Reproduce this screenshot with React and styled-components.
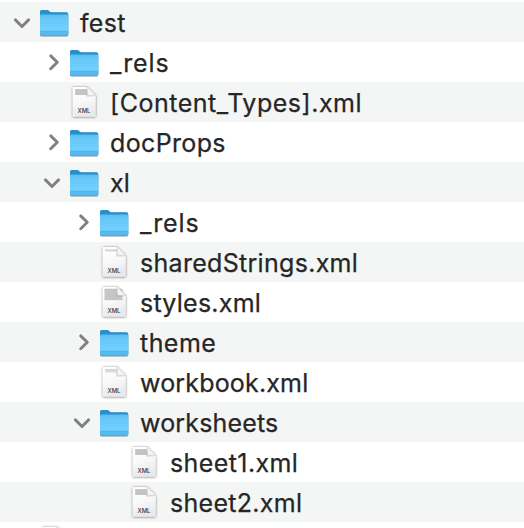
import React from 'react';
import styled, { createGlobalStyle } from 'styled-components';

const GlobalStyle = createGlobalStyle`
  html, body { margin: 0; background: #fff; overflow: hidden; }
`;

const Tree = styled.div`
  display: flex;
  flex-direction: column;
  width: 524px;
  height: 528px;
  padding-top: 2px;
  box-sizing: border-box;
  overflow: hidden;
  background: #fff;
  font-family: Inter, "Liberation Sans", sans-serif;
`;

const Row = styled.div`
  display: flex;
  flex: none;
  align-items: center;
  height: 40px;
  padding-left: ${(p) => 10 + p.$level * 30}px;
  background: ${(p) => (p.$striped ? '#f4f5f5' : '#fff')};
`;

const Disclosure = styled.div`
  width: 24px;
  height: 24px;
  flex: none;
  svg { display: block; }
`;

const IconSlot = styled.div`
  width: 40px;
  height: 40px;
  padding-left: 4px;
  box-sizing: border-box;
  flex: none;
  margin-right: 6px;
  svg { display: block; }
`;

const Label = styled.span`
  font-size: 25px;
  font-weight: 400;
  line-height: 40px;
  padding-top: 1.6px;
  color: #262626;
  -webkit-text-stroke: 0.25px #262626;
  white-space: pre;
  letter-spacing: ${(p) => p.$tracking}px;
`;

function Chevron({ open }) {
  return (
    <svg width="24" height="24" viewBox="0 0 24 24" fill="none" stroke="#808080" strokeWidth="2.9" strokeLinecap="round" strokeLinejoin="round">
      <path d={open ? 'M5.4 9.9L12 16.5L18.6 9.9' : 'M10.7 5.9L17.3 12.3L10.7 18.7'} />
    </svg>
  );
}

function FolderIcon() {
  return (
    <svg width="34" height="40" viewBox="0 0 34 40">
      <defs>
        <linearGradient id="folderFront" x1="0" y1="0" x2="0" y2="1">
          <stop offset="0" stopColor="#5dbcee" />
          <stop offset="0.2" stopColor="#67c8f9" />
          <stop offset="0.7" stopColor="#70cffd" />
          <stop offset="1" stopColor="#63c4f6" />
        </linearGradient>
        <filter id="folderShadow" x="-15%" y="-15%" width="130%" height="130%">
          <feDropShadow dx="0" dy="0.5" stdDeviation="0.6" floodColor="#000" floodOpacity="0.4" />
        </filter>
      </defs>
      <g filter="url(#folderShadow)">
        <path d="M2 13V9.6Q2 8 3.6 8H9.2C10.8 8 11.4 10.2 13 10.2H28.4Q30.2 10.2 30.2 12V32Q30.2 33.8 28.4 33.8H3.8Q2 33.8 2 32Z" fill="#2590cd" />
        <path d="M2 13.4Q2 12.6 3 12.6H29.2Q30.2 12.6 30.2 13.4V32Q30.2 33.8 28.4 33.8H3.8Q2 33.8 2 32Z" fill="url(#folderFront)" />
      </g>
      <path d="M2 29.6H30.2V32Q30.2 33.8 28.4 33.8H3.8Q2 33.8 2 32Z" fill="#58b9ee" />
      <path d="M2.2 29.3H30" stroke="#48abe2" strokeWidth="0.7" />
      <path d="M2.3 32.2Q2.3 33.7 3.8 33.7H28.4Q29.9 33.7 29.9 32.2" fill="none" stroke="#469dcc" strokeWidth="0.6" />
    </svg>
  );
}

const previews = {
  block: { y: 7.2, h: 5.8, fill: '#c4c4c4' },
  line: { y: 7.5, h: 2, fill: '#dcdcdc' },
  large: { y: 6.8, h: 11.4, fill: '#c6c6c6' },
  strip: { y: 7.2, h: 3.4, fill: '#dcdcdc' },
};

function DocumentIcon({ preview, badge }) {
  const p = previews[preview];
  const large = preview === 'large';
  const left = large ? 6.5 : 7.2;
  return (
    <svg width="34" height="40" viewBox="0 0 34 40">
      <defs>
        <linearGradient id="paper" x1="0" y1="0" x2="0.25" y2="1">
          <stop offset="0" stopColor="#fff" />
          <stop offset="0.5" stopColor="#fafafa" />
          <stop offset="1" stopColor="#e9e9e9" />
        </linearGradient>
        <linearGradient id="fold" x1="0" y1="1" x2="1" y2="0">
          <stop offset="0" stopColor="#f0f0f0" />
          <stop offset="1" stopColor="#fff" />
        </linearGradient>
        <filter id="sheetShadow" x="-20%" y="-20%" width="140%" height="140%">
          <feDropShadow dx="0" dy="0.3" stdDeviation="0.8" floodColor="#000" floodOpacity="0.6" />
        </filter>
      </defs>
      <path d="M4.7 5H19.3L27.7 13.4V34.8H4.7Z" fill="url(#paper)" filter="url(#sheetShadow)" />
      <rect x={left} y={p.y} width={large ? 18 : 12.5} height={p.h} fill={p.fill} />
      <path d={`M${left} ${p.y + 0.6}H19.3`} stroke="#b2b2b2" strokeWidth="0.6" strokeDasharray="1 0.7" />
      <path d="M19.1 6.6L17.8 14.8L26.5 14.4Z" fill="#777" opacity="0.2" />
      <path d="M19.2 5V12Q19.2 13.4 20.6 13.4H27.7Z" fill="url(#fold)" stroke="#bcbcbc" strokeWidth="0.45" />
      {badge && (
        <text x="16" y="31.3" textAnchor="middle" textLength="12.8" lengthAdjust="spacing" fontFamily="Inter, sans-serif" fontSize="6" fontWeight="500" fill="#3c3c3c">XML</text>
      )}
    </svg>
  );
}

const entries = [
  { name: 'fest', level: 0, open: true, tracking: 0.3 },
  { name: '_rels', level: 1, open: false, tracking: 0.9 },
  { name: '[Content_Types].xml', level: 1, preview: 'block', tracking: 0.52 },
  { name: 'docProps', level: 1, open: false, tracking: 0.35 },
  { name: 'xl', level: 1, open: true, tracking: 0 },
  { name: '_rels', level: 2, open: false, tracking: 0.9 },
  { name: 'sharedStrings.xml', level: 2, preview: 'line', tracking: 0.3 },
  { name: 'styles.xml', level: 2, preview: 'large', tracking: 0.25 },
  { name: 'theme', level: 2, open: false, tracking: 0.45 },
  { name: 'workbook.xml', level: 2, preview: 'strip', tracking: 0.17 },
  { name: 'worksheets', level: 2, open: true, tracking: 0.17 },
  { name: 'sheet1.xml', level: 3, preview: 'block', tracking: 0.4 },
  { name: 'sheet2.xml', level: 3, preview: 'block', tracking: 0.3 },
];

export default function App() {
  return (
    <>
      <GlobalStyle />
      <Tree>
        {entries.map((e, i) => (
          <Row key={i} $level={e.level} $striped={i % 2 === 0}>
            <Disclosure>{e.preview ? null : <Chevron open={e.open} />}</Disclosure>
            <IconSlot>{e.preview ? <DocumentIcon preview={e.preview} badge /> : <FolderIcon />}</IconSlot>
            <Label $tracking={e.tracking}>{e.name}</Label>
          </Row>
        ))}
        <Row $level={0}>
          <Disclosure />
          <IconSlot><DocumentIcon preview="block" /></IconSlot>
        </Row>
      </Tree>
    </>
  );
}
